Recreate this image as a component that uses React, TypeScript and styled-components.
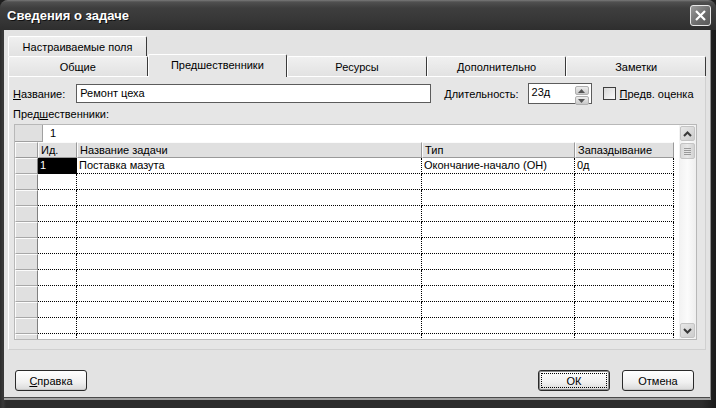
import React, { FunctionComponent } from "react";
import styled, { createGlobalStyle } from "styled-components";

const GlobalStyle = createGlobalStyle`
  html, body {
    margin: 0;
    padding: 0;
    width: 716px;
    height: 408px;
    overflow: hidden;
    background: #1e1e1e;
  }
  body {
    font-family: "Liberation Sans", Arial, sans-serif;
    font-size: 11px;
    color: #000;
  }
`;

const WindowFrame = styled.div`
  width: 716px;
  height: 408px;
  display: flex;
  flex-direction: column;
  background: linear-gradient(90deg, #2c2c2c, #3a3a3a 3px, #2c2c2c 6px, #2c2c2c 98%, #1a1a1a);
  border-radius: 8px 8px 0 0;
  overflow: hidden;
`;

const TitleBar = styled.div`
  height: 30px;
  flex: none;
  display: flex;
  align-items: center;
  justify-content: space-between;
  padding: 0 5px 0 7px;
  box-sizing: border-box;
  background: linear-gradient(#7a7a7a 0, #505050 2px, #3e3e3e 8px, #383838 60%, #2e2e2e 100%);
`;

const TitleText = styled.div`
  color: #fff;
  font-weight: bold;
  font-size: 13px;
  text-shadow: 1px 1px 0 #101010;
`;

const CloseButton = styled.div`
  width: 21px;
  height: 21px;
  box-sizing: border-box;
  border: 1px solid #e8e8e8;
  border-radius: 3px;
  background: linear-gradient(135deg, #9a9a9a, #6a6a6a 60%, #5a5a5a);
  display: flex;
  align-items: center;
  justify-content: center;
  margin-top: 1px;
`;

const Body = styled.div`
  flex: 1;
  margin: 0 5px 8px 4px;
  padding: 6px 4px 0 4px;
  display: flex;
  flex-direction: column;
  background: #e3e3e3;
  border-right: 1px solid #8c8c8c;
  border-bottom: 2px solid #a2a2a2;
  box-shadow: inset 0 -1px 0 #4a4a4a;
  box-sizing: border-box;
`;

const TabStrip = styled.div`
  display: flex;
  height: 18px;
`;

const TabRow = styled.div`
  display: flex;
  align-items: flex-end;
  height: 22px;
  position: relative;
  z-index: 1;
`;

const Tab = styled.div<{ $active?: boolean; $width?: number }>`
  ${(p) => (p.$width ? `width: ${p.$width}px;` : "flex: 1;")}
  height: ${(p) => (p.$active ? 23 : 20)}px;
  margin-bottom: ${(p) => (p.$active ? -1 : 0)}px;
  box-sizing: border-box;
  display: flex;
  align-items: center;
  justify-content: center;
  background: ${(p) => (p.$active ? "#e6e6e6" : "linear-gradient(#f0f0f0, #e2e2e2)")};
  border-top: 1px solid #fff;
  border-left: 1px solid #fff;
  border-right: 1px solid #3a3a3a;
  border-radius: 2px 2px 0 0;
  padding-bottom: ${(p) => (p.$active ? 3 : 0)}px;
  font-size: 11px;
`;

const Panel = styled.div`
  height: 274px;
  box-sizing: border-box;
  background: #e6e6e6;
  border-top: 1px solid #fff;
  border-left: 1px solid #fff;
  border-right: 1px solid #d0d0d0;
  border-bottom: 1px solid #d0d0d0;
  padding: 6px 9px 0 4px;
  display: flex;
  flex-direction: column;
`;

const FieldRow = styled.div`
  display: flex;
  align-items: center;
  height: 21px;
`;

const Label = styled.span<{ $gap?: number; $lead?: number }>`
  margin-right: ${(p) => p.$gap ?? 0}px;
  margin-left: ${(p) => p.$lead ?? 0}px;
  white-space: nowrap;
`;

const Key = styled.span`
  text-decoration: underline;
`;

const TextInput = styled.div<{ $width: number; $height: number }>`
  width: ${(p) => p.$width}px;
  height: ${(p) => p.$height}px;
  box-sizing: border-box;
  border: 1px solid #5c5c5c;
  background: #fff;
  padding: 1px 3px;
  display: flex;
  align-items: flex-start;
  line-height: 14px;
  position: relative;
`;

const SpinBox = styled.div`
  position: absolute;
  right: 2px;
  top: 2px;
  width: 14px;
  display: flex;
  flex-direction: column;
  gap: 1px;
`;

const SpinHalf = styled.div`
  height: 7px;
  border-radius: 2px;
  background: linear-gradient(#eeeeee, #c8c8c8);
  border: 1px solid #b0b0b0;
  display: flex;
  align-items: center;
  justify-content: center;
`;

const CheckBox = styled.div`
  width: 13px;
  height: 13px;
  box-sizing: border-box;
  border: 1px solid #3e3e3e;
  background: linear-gradient(135deg, #d8d8d8, #fafafa);
  margin: 0 4px 0 11px;
`;

const SectionLabel = styled.div`
  margin: 4px 0 3px 0;
  line-height: 13px;
`;

const GridBox = styled.div`
  margin-left: 1px;
  width: 683px;
  height: 216px;
  box-sizing: border-box;
  border: 1px solid #b8b8b8;
  background: #fff;
  display: flex;
`;

const TableArea = styled.div`
  flex: 1;
  overflow: hidden;
  display: flex;
  flex-direction: column;
`;

const EditRow = styled.div`
  height: 17px;
  flex: none;
  display: flex;
`;

const EditCorner = styled.div`
  width: 28px;
  box-sizing: border-box;
  background: #e0e0e0;
  border-right: 1px solid #a0a0a0;
  border-bottom: 1px solid #a0a0a0;
`;

const EditField = styled.div`
  flex: 1;
  padding: 2px 0 0 7px;
  line-height: 13px;
`;

const COLUMNS = "23px 39px 345px 153px 99px";

const GridRow = styled.div`
  display: grid;
  grid-template-columns: ${COLUMNS};
  height: 16px;
  flex: none;
`;

const HeaderCell = styled.div`
  box-sizing: border-box;
  background: #e0e0e0;
  border-top: 1px solid #fbfbfb;
  border-left: 1px solid #fbfbfb;
  border-right: 1px solid #9a9a9a;
  border-bottom: 1px solid #9a9a9a;
  padding: 1px 0 0 2px;
  line-height: 13px;
  white-space: nowrap;
  overflow: hidden;
`;

const RowHead = styled.div`
  box-sizing: border-box;
  background: #e0e0e0;
  border-top: 1px solid #fbfbfb;
  border-left: 1px solid #fbfbfb;
  border-bottom: 1px solid #a8a8a8;
  border-right: 1px solid #808080;
`;

const Cell = styled.div<{ $selected?: boolean }>`
  box-sizing: border-box;
  border-right: 1px dotted #000;
  border-bottom: 1px dotted #000;
  padding: 1px 0 0 2px;
  line-height: 13px;
  white-space: nowrap;
  overflow: hidden;
  background: ${(p) => (p.$selected ? "#000" : "#fff")};
  color: ${(p) => (p.$selected ? "#fff" : "#000")};
`;

const ScrollBar = styled.div`
  width: 17px;
  flex: none;
  display: flex;
  flex-direction: column;
  padding: 1px 0;
  box-sizing: border-box;
  background: linear-gradient(90deg, #f2f2f2, #fbfbfb 50%, #efefef);
`;

const ScrollButton = styled.div`
  height: 15px;
  margin: 0 1px;
  box-sizing: border-box;
  border: 1px solid #c4c4c4;
  border-radius: 2px;
  background: linear-gradient(135deg, #e8e8e8, #cdcdcd);
  display: flex;
  align-items: center;
  justify-content: center;
`;

const Thumb = styled(ScrollButton)`
  margin-top: 2px;
  height: 16px;
  background: linear-gradient(90deg, #dadada, #e8e8e8 50%, #d2d2d2);
`;

const ScrollSpacer = styled.div`
  flex: 1;
`;

const ButtonRow = styled.div`
  display: flex;
  align-items: center;
  margin-top: 20px;
  padding: 0 12px 0 7px;
  gap: 12px;
`;

const Spacer = styled.div`
  flex: 1;
`;

const DialogButton = styled.div<{ $default?: boolean }>`
  width: 72px;
  height: 21px;
  box-sizing: border-box;
  border: 1px solid #2a2a2a;
  border-radius: 3px;
  background: linear-gradient(#fefefe, #f0f0f0 60%, #d9d9d9);
  display: flex;
  align-items: center;
  justify-content: center;
  position: relative;
  box-shadow: ${(p) => (p.$default ? "inset 0 0 0 1px #8a8a8a" : "inset 0 -1px 0 #c8c8c8")};
  &::after {
    content: "";
    display: ${(p) => (p.$default ? "block" : "none")};
    position: absolute;
    inset: 2px;
    border: 1px dotted #000;
  }
`;

const Chevron: FunctionComponent<{ up?: boolean }> = ({ up }) => (
  <svg width="9" height="6" viewBox="0 0 9 6">
    <path
      d={up ? "M1 5 L4.5 1.5 L8 5" : "M1 1 L4.5 4.5 L8 1"}
      fill="none"
      stroke="#3a3a3a"
      strokeWidth="2"
    />
  </svg>
);

const SpinArrow: FunctionComponent<{ up?: boolean }> = ({ up }) => (
  <svg width="7" height="4" viewBox="0 0 7 4">
    <path d={up ? "M0 4 L3.5 0 L7 4 Z" : "M0 0 L3.5 4 L7 0 Z"} fill="#555" />
  </svg>
);

const Grip = () => (
  <svg width="7" height="7" viewBox="0 0 7 7">
    {[0.5, 2.5, 4.5, 6.5].map((y) => (
      <line key={y} x1="0" x2="7" y1={y} y2={y} stroke="#9a9a9a" strokeWidth="1" />
    ))}
  </svg>
);

interface Predecessor {
  id: string;
  name: string;
  type: string;
  lag: string;
}

const predecessors: Predecessor[] = [
  { id: "1", name: "Поставка мазута", type: "Окончание-начало (ОН)", lag: "0д" },
];

const EMPTY_ROWS = 11;

const App: FunctionComponent = () => {
  const rows: (Predecessor | null)[] = [
    ...predecessors,
    ...Array.from({ length: EMPTY_ROWS }, () => null),
  ];
  return (
    <>
      <GlobalStyle />
      <WindowFrame>
        <TitleBar>
          <TitleText>Сведения о задаче</TitleText>
          <CloseButton>
            <svg width="13" height="13" viewBox="0 0 13 13">
              <path d="M2 2 L11 11 M11 2 L2 11" stroke="#fff" strokeWidth="2.2" />
            </svg>
          </CloseButton>
        </TitleBar>
        <Body>
          <TabStrip>
            <Tab $width={139}>Настраиваемые поля</Tab>
          </TabStrip>
          <TabRow>
            <Tab>Общие</Tab>
            <Tab $active>Предшественники</Tab>
            <Tab>Ресурсы</Tab>
            <Tab>Дополнительно</Tab>
            <Tab>Заметки</Tab>
          </TabRow>
          <Panel>
            <FieldRow>
              <Label $gap={11}>
                <Key>Н</Key>азвание:
              </Label>
              <TextInput $width={355} $height={19}>Ремонт цеха</TextInput>
              <Label $gap={9} $lead={13}>
                <Key>Д</Key>лительность:
              </Label>
              <TextInput $width={64} $height={21}>
                23д
                <SpinBox>
                  <SpinHalf>
                    <SpinArrow up />
                  </SpinHalf>
                  <SpinHalf>
                    <SpinArrow />
                  </SpinHalf>
                </SpinBox>
              </TextInput>
              <CheckBox />
              <Label>
                <Key>П</Key>редв. оценка
              </Label>
            </FieldRow>
            <SectionLabel>
              Пред<Key>ш</Key>ественники:
            </SectionLabel>
            <GridBox>
              <TableArea>
                <EditRow>
                  <EditCorner />
                  <EditField>1</EditField>
                </EditRow>
                <GridRow>
                  <HeaderCell />
                  <HeaderCell>Ид.</HeaderCell>
                  <HeaderCell>Название задачи</HeaderCell>
                  <HeaderCell>Тип</HeaderCell>
                  <HeaderCell>Запаздывание</HeaderCell>
                </GridRow>
                {rows.map((row, i) => (
                  <GridRow key={i}>
                    <RowHead />
                    <Cell $selected={i === 0}>{row?.id}</Cell>
                    <Cell>{row?.name}</Cell>
                    <Cell>{row?.type}</Cell>
                    <Cell>{row?.lag}</Cell>
                  </GridRow>
                ))}
              </TableArea>
              <ScrollBar>
                <ScrollButton>
                  <Chevron up />
                </ScrollButton>
                <Thumb>
                  <Grip />
                </Thumb>
                <ScrollSpacer />
                <ScrollButton>
                  <Chevron />
                </ScrollButton>
              </ScrollBar>
            </GridBox>
          </Panel>
          <ButtonRow>
            <DialogButton>
              <span>
                <Key>С</Key>правка
              </span>
            </DialogButton>
            <Spacer />
            <DialogButton $default>ОК</DialogButton>
            <DialogButton>Отмена</DialogButton>
          </ButtonRow>
        </Body>
      </WindowFrame>
    </>
  );
};

export default App;
